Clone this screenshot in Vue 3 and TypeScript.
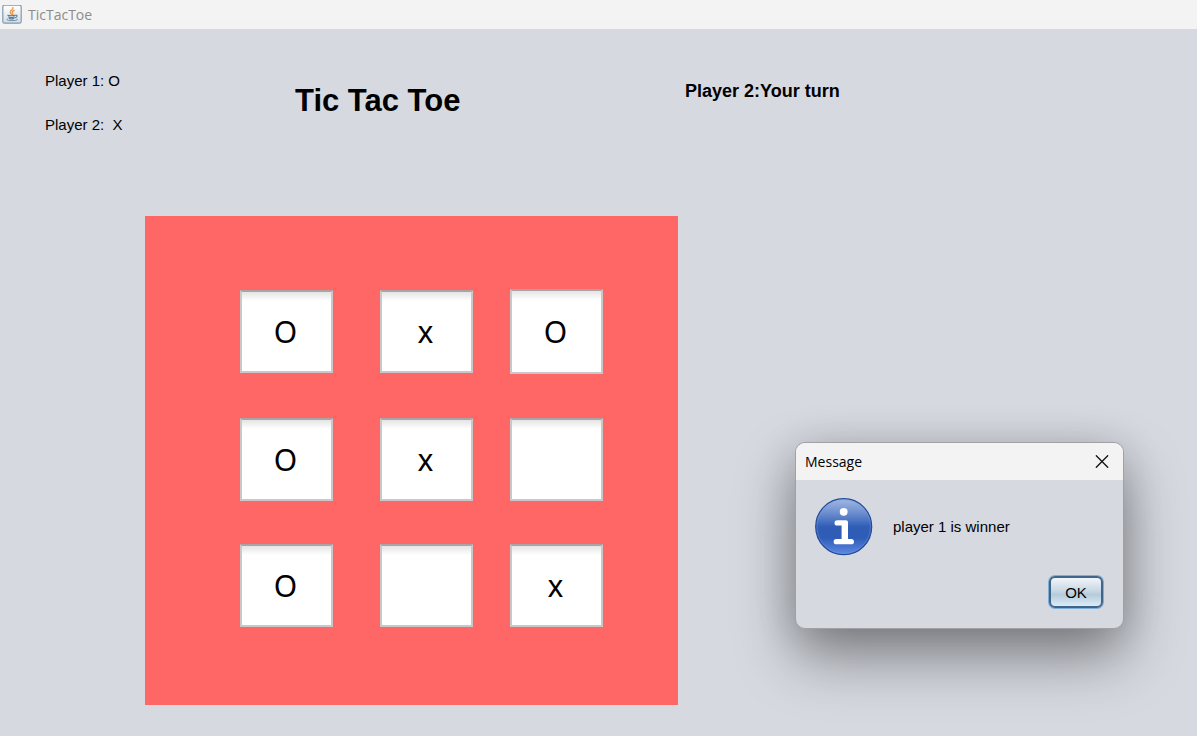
<script setup lang="ts">
import { ref } from 'vue'

const cells = ref<string[]>(['O', 'x', 'O', 'O', 'x', '', 'O', '', 'x'])
const open = ref(true)
const close = () => {
  open.value = false
}
</script>

<template>
  <div class="window">
    <header class="titlebar">
      <svg class="java" viewBox="0 0 20 20" aria-hidden="true">
        <defs>
          <linearGradient id="tile" x1="0" y1="0" x2="0" y2="1">
            <stop offset="0" stop-color="#ffffff" />
            <stop offset="1" stop-color="#d5dce2" />
          </linearGradient>
        </defs>
        <rect x="0.8" y="0.2" width="18.4" height="18" rx="1.8" fill="url(#tile)" stroke="#7e9bb2" stroke-width="1.2" />
        <path d="M10.9 2.600c1 2-3.500 3-2.600 5 .3.8 1.300 1.200 1.100 2.300M12.300 5.400c-1.900.8-2.600 1.600-1.500 2.700.5.600.1 1.200-.3 1.700" fill="none" stroke="#ea9142" stroke-width="1.300" stroke-linecap="round" />
        <path d="M5.800 10.200c1.700.7 5.900.7 7.400 0M6.500 12c1.600.6 4.500.6 5.900 0M7.200 13.500c1.300.5 3.500.5 4.700 0M13.400 10.300c2.200-.6 2.300 1.700-.1 2.500" fill="none" stroke="#557c9c" stroke-width="1.100" stroke-linecap="round" />
        <path d="M5.400 14c-2 .7.300 1.600 4.500 1.600s7-.8 5.200-1.600" fill="none" stroke="#6f92ad" stroke-width="1" stroke-linecap="round" />
      </svg>
      <span>TicTacToe</span>
    </header>

    <main class="content">
      <section class="heading">
        <div class="players">
          <p>Player 1: O</p>
          <p>Player 2:&nbsp; X</p>
        </div>
        <h1>Tic Tac Toe</h1>
        <p class="status">Player 2:Your turn</p>
      </section>

      <section class="board" aria-label="Board">
        <input
          v-for="(_, i) in cells"
          :key="i"
          v-model="cells[i]"
          class="cell"
          :class="{ tall: i === 2 }"
          type="text"
          maxlength="1"
          :aria-label="`Cell ${i + 1}`"
        />
      </section>
    </main>

    <div v-if="open" class="dialog" role="dialog" aria-labelledby="dialog-title">
      <div class="dialog-bar">
        <span id="dialog-title">Message</span>
        <button class="close" type="button" aria-label="Close" @click="close">
          <svg viewBox="0 0 14 14" aria-hidden="true">
            <path d="M1.300 0.800 12.700 12.200M12.700 0.800 1.300 12.200" stroke="#111" stroke-width="1.300" stroke-linecap="round" />
          </svg>
        </button>
      </div>
      <div class="dialog-body">
        <div class="message">
          <svg class="info" viewBox="0 0 58 58" aria-hidden="true">
            <defs>
              <linearGradient id="disc" x1="0" y1="0" x2="0" y2="1">
                <stop offset="0" stop-color="#a3b8e2" />
                <stop offset="0.25" stop-color="#6d8fd0" />
                <stop offset="0.5" stop-color="#305eb6" />
                <stop offset="0.7" stop-color="#2e5cb6" />
                <stop offset="1" stop-color="#5c8ae6" />
              </linearGradient>
            </defs>
            <circle cx="28.700" cy="28.700" r="28" fill="url(#disc)" stroke="#214899" stroke-width="1.200" />
            <circle cx="28.700" cy="28.700" r="26.800" fill="none" stroke="#7f9fdc" stroke-opacity="0.500" stroke-width="0.800" />
            <circle cx="28.700" cy="13.800" r="3.900" fill="#fff" />
            <path d="M22.200 22.200H31q2 0 2 2V41h3.300a2.600 2.600 0 0 1 0 5.300H21.300a2.600 2.600 0 0 1 0-5.300H26.600V27.600h-4.400a2.600 2.600 0 0 1 0-5.400z" fill="#fff" />
          </svg>
          <p>player 1 is winner</p>
        </div>
        <button class="ok" type="button" @click="close">OK</button>
      </div>
    </div>
  </div>
</template>

<style>
body {
  margin: 0;
  background: #d6d9e0;
}
</style>

<style scoped>
* {
  box-sizing: border-box;
}

p,
h1 {
  margin: 0;
}

.window {
  position: relative;
  min-height: 100vh;
  background: #d6d9e0;
  color: #000;
  font-family: "Liberation Sans", Arial, sans-serif;
  font-size: 15px;
  line-height: 20px;
}

.titlebar {
  display: flex;
  align-items: center;
  gap: 6px;
  height: 29px;
  padding-left: 2px;
  background: #f3f3f3;
  color: #8c8c8c;
  font-family: "Open Sans", "Noto Sans", sans-serif;
  font-size: 14px;
}

.java {
  width: 20px;
  height: 20px;
}

.heading {
  display: grid;
  grid-template-columns: 250px 390px 1fr;
  align-items: start;
  padding: 42px 45px 0;
}

.players {
  display: grid;
  gap: 24px;
}

h1 {
  padding-top: 10px;
  font-size: 31px;
  line-height: 40px;
}

.status {
  padding-top: 10px;
  font-size: 18px;
  font-weight: bold;
}

.board {
  display: grid;
  grid-template-columns: 140px 130px 93px;
  grid-template-rows: 128px 126px 83px;
  width: fit-content;
  margin: 81px 0 0 145px;
  padding: 74px 75px 78px 95px;
  background: #ff6666;
}

.cell {
  width: 93px;
  height: 83px;
  padding: 0 2px 1px 0;
  border: 2px solid #c8c8c8;
  border-top-color: #aaa4a4;
  border-radius: 1px;
  outline: none;
  background: linear-gradient(#e4e4e4, #fff 9px);
  color: #000;
  font-family: "Noto Sans", sans-serif;
  font-size: 30px;
  text-align: center;
}

.cell.tall {
  height: 85px;
  margin-top: -1px;
}

.dialog {
  position: absolute;
  top: 442px;
  right: 73px;
  width: 329px;
  border: 1px solid #a0a1a5;
  border-radius: 10px;
  background: #d6d9e0;
  box-shadow: 0 28px 60px rgba(0, 0, 0, 0.4), 0 4px 40px rgba(0, 0, 0, 0.14);
}

.dialog-bar {
  display: flex;
  align-items: center;
  justify-content: space-between;
  height: 37px;
  padding: 0 12px 0 9px;
  border-radius: 9px 9px 0 0;
  background: #f3f3f3;
  font-family: "Open Sans", "Noto Sans", sans-serif;
  font-size: 14px;
}

.close {
  display: flex;
  padding: 2px;
  border: 0;
  background: none;
}

.close svg {
  width: 14px;
  height: 14px;
}

.dialog-body {
  display: flex;
  flex-direction: column;
  gap: 20px;
  padding: 18px 20px 20px 19px;
}

.message {
  display: flex;
  align-items: center;
  gap: 20px;
}

.info {
  width: 58px;
  height: 58px;
}

.ok {
  align-self: flex-end;
  width: 54px;
  height: 32px;
  padding: 0;
  border: 2px solid #3f658a;
  border-radius: 6px;
  background: linear-gradient(#f2f5f8, #c5d6e3 48%, #b6cbdb 60%, #dcecf8);
  box-shadow: 0 0 0 1px #80add3;
  color: #000;
  font-family: inherit;
  font-size: 15px;
}
</style>
